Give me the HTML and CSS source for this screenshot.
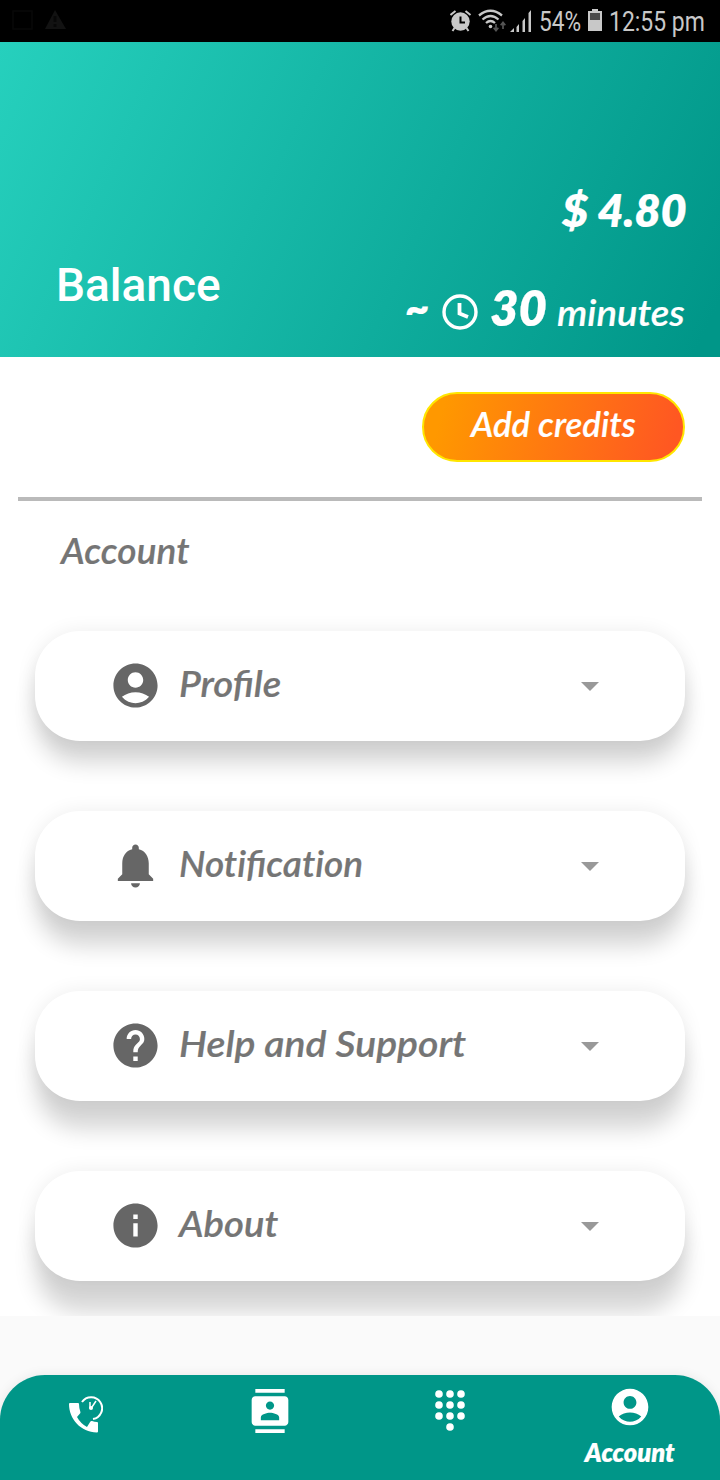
FILE: index.html
```html
<!DOCTYPE html>
<html lang="en">
<head>
<meta charset="utf-8">
<title>Account</title>
<link rel="stylesheet" href="styles.css">
</head>
<body>
<div class="phone">
  <div class="status">
    <svg class="notices" width="60" height="24" viewBox="0 0 60 24">
      <rect x="1" y="2" width="19" height="18" fill="none" stroke="#080808" stroke-width="1.500"/>
      <path d="M43 1L54 20H33z" fill="#121212"/><path d="M41.500 7h3v6h-3zM41.500 15h3v3h-3z" fill="#080808"/>
    </svg>
    <div class="status-right">
      <svg class="alarm" width="22" height="24" viewBox="0 0 22 24">
        <circle cx="10.500" cy="12.500" r="9.200" fill="#c8c8c8"/>
        <path d="M.500 6l5-4M20.500 6l-5-4M4.500 19l-2 3M16.500 19l2 3" stroke="#c8c8c8" stroke-width="2"/>
        <path d="M10.500 7.500v6H15" fill="none" stroke="#000" stroke-width="2"/>
      </svg>
      <svg class="wifi" width="28" height="24" viewBox="0 0 28 24">
        <g fill="none" stroke="#c8c8c8" stroke-width="2.300"><path d="M1 6.500q11.500-9.500 23 0"/><path d="M4.500 10.500q8-7 16 0"/><path d="M8 14q4.500-4 9 0"/></g>
        <circle cx="12.500" cy="17.500" r="1.800" fill="#c8c8c8"/>
        <path d="M18 15v6M15.700 18.700l2.300 3 2.300-3M25 20v-6M22.700 16.300l2.300-3 2.300 3" fill="none" stroke="#555" stroke-width="1.700"/>
      </svg>
      <svg class="signal" width="22" height="24" viewBox="0 0 22 24">
        <path d="M0 23l4-4v4zM6.500 18l2.500-3v8H6.500zM12.500 12l2.500-3v14h-2.500zM18.500 4L21 1v22h-2.500z" fill="#c8c8c8"/>
      </svg>
      <span class="percent">54%</span>
      <svg class="battery" width="14" height="22" viewBox="0 0 14 22"><path d="M4 0h6v2h4v20H0V2h4z" fill="#c8c8c8"/><path d="M2 4h10v7H2z" fill="#4a4a4a"/></svg>
      <span class="time">12:55 pm</span>
    </div>
  </div>

  <header class="hero">
    <div class="title">Balance</div>
    <div class="amounts">
      <div class="money"><span class="t t-money">$ 4.80</span></div>
      <div class="minutes">
        <span class="t t-tilde">~</span>
        <svg class="clock" width="36" height="36" viewBox="0 0 36 36" fill="none" stroke="#fff"><circle cx="18" cy="18" r="16" stroke-width="3.400"/><path d="M17.500 9v10.500l8.500 3.500" stroke-width="3.800"/></svg>
        <span class="t t-thirty">30</span>
        <span class="t t-unit">minutes</span>
      </div>
    </div>
  </header>

  <main class="content">
    <div class="actions"><button class="add"><span class="t t-add">Add credits</span></button></div>
    <div class="rule"></div>
    <h2 class="section"><span class="t t-section">Account</span></h2>
    <div class="cards">
      <div class="card first">
        <svg class="icon" viewBox="0 0 24 24"><path d="M12 2C6.480 2 2 6.480 2 12s4.480 10 10 10 10-4.480 10-10S17.520 2 12 2zm0 4c1.930 0 3.500 1.570 3.500 3.500S13.930 13 12 13s-3.500-1.570-3.500-3.500S10.070 6 12 6zm0 14c-2.030 0-4.430-.820-6.140-2.880C7.550 15.800 9.680 15 12 15s4.450.800 6.140 2.120C16.430 19.180 14.030 20 12 20z"/></svg>
        <span class="t t-profile">Profile</span><i class="caret"></i>
      </div>
      <div class="card second">
        <svg class="icon" viewBox="0 0 24 24"><path d="M12 22c1.100 0 2-.900 2-2h-4c0 1.100.890 2 2 2zm6-6v-5c0-3.070-1.640-5.640-4.500-6.320V4c0-.830-.670-1.500-1.500-1.500s-1.500.670-1.500 1.500v.680C7.630 5.360 6 7.920 6 11v5l-2 2v1h16v-1l-2-2z"/></svg>
        <span class="t t-notification">Not&zwnj;ificat&zwnj;ion</span><i class="caret"></i>
      </div>
      <div class="card third">
        <svg class="icon" viewBox="0 0 24 24"><path d="M12 2C6.480 2 2 6.480 2 12s4.480 10 10 10 10-4.480 10-10S17.520 2 12 2zm1 17h-2v-2h2v2zm2.070-7.750l-.900.920C13.450 12.900 13 13.500 13 15h-2v-.500c0-1.100.450-2.100 1.170-2.830l1.240-1.260c.370-.360.590-.860.590-1.410 0-1.100-.900-2-2-2s-2 .900-2 2H8c0-2.210 1.790-4 4-4s4 1.790 4 4c0 .880-.360 1.680-.930 2.250z"/></svg>
        <span class="t t-help">Help and Support</span><i class="caret"></i>
      </div>
      <div class="card fourth">
        <svg class="icon" viewBox="0 0 24 24"><path d="M12 2C6.480 2 2 6.480 2 12s4.480 10 10 10 10-4.480 10-10S17.520 2 12 2zm1 15h-2v-6h2v6zm0-8h-2V7h2v2z"/></svg>
        <span class="t t-about">About</span><i class="caret"></i>
      </div>
    </div>
  </main>

  <nav class="nav">
    <div class="tab">
      <svg class="calls" width="34" height="38" viewBox="0 0 34 38"><path d="M0 8q0-1 1-1h8q1 0 1 1 0 4 1.400 8 .2 1-.4 1.600L8 21q3.500 6.500 10 10l3.400-5.500q.7-.7 1.600-.4 2.500.9 5 .9 1 0 1 1v8.400q0 1-1 1C12 36.500 0 23 0 8z" fill="#fff"/><path d="M13 6A11 11 0 1 1 24 23" fill="none" stroke="#fff" stroke-width="2"/><path d="M21 6v6.500M27 5l-5 7.500" stroke="#fff" stroke-width="1.500"/><circle cx="22" cy="12" r="2" fill="#fff"/></svg>
    </div>
    <div class="tab">
      <svg class="contacts" width="44" height="44" viewBox="0 0 24 24"><path fill="#fff" d="M20 0H4v2h16V0zM4 24h16v-2H4v2zM20 4H4c-1.100 0-2 .900-2 2v12c0 1.100.900 2 2 2h16c1.100 0 2-.900 2-2V6c0-1.100-.900-2-2-2zm-8 2.750c1.240 0 2.250 1.010 2.250 2.250s-1.010 2.250-2.250 2.250S9.750 10.240 9.750 9 10.760 6.750 12 6.750zM17 17H7v-1.500c0-1.670 3.330-2.500 5-2.500s5 .830 5 2.500V17z"/></svg>
    </div>
    <div class="tab">
      <svg class="dialpad" width="30" height="41" viewBox="0 0 30 41" fill="#fff"><circle cx="4" cy="4" r="3.800"/><circle cx="15" cy="4" r="3.800"/><circle cx="26" cy="4" r="3.800"/><circle cx="4" cy="15" r="3.800"/><circle cx="15" cy="15" r="3.800"/><circle cx="26" cy="15" r="3.800"/><circle cx="4" cy="26" r="3.800"/><circle cx="15" cy="26" r="3.800"/><circle cx="26" cy="26" r="3.800"/><circle cx="15" cy="37" r="3.800"/></svg>
    </div>
    <div class="tab active">
      <svg width="44" height="44" viewBox="0 0 24 24"><path fill="#fff" d="M12 2C6.480 2 2 6.480 2 12s4.480 10 10 10 10-4.480 10-10S17.520 2 12 2zm0 4c1.930 0 3.500 1.570 3.500 3.500S13.930 13 12 13s-3.500-1.570-3.500-3.500S10.070 6 12 6zm0 14c-2.030 0-4.430-.820-6.140-2.880C7.550 15.800 9.680 15 12 15s4.450.800 6.140 2.120C16.430 19.180 14.030 20 12 20z"/></svg>
      <span class="t t-tab">Account</span>
    </div>
  </nav>
</div>
</body>
</html>
```
FILE: styles.css
```css
* { box-sizing: border-box; }
body { margin: 0; background: #fafafa; font-family: Lato, "Open Sans", sans-serif; }
.phone { width: 720px; height: 1480px; display: flex; flex-direction: column; overflow: hidden; background: #fafafa; }

.status { height: 42px; flex: none; background: #000; color: #c8c8c8; display: flex; justify-content: space-between; align-items: flex-start; padding: 10px 0 0 12px; font-family: Roboto, sans-serif; }
.status-right { display: flex; align-items: flex-start; width: 270px; }
.wifi { margin-left: 6px; }
.signal { margin-left: 4px; }
.notices { margin-top: -1px; }
.alarm, .wifi, .signal { flex: none; margin-top: -1px; }
.battery { flex: none; margin-left: 7px; margin-top: -1px; }
.percent, .time { font-size: 27px; line-height: 25px; white-space: nowrap; transform-origin: left; display: block; }
.percent { width: 42px; margin-left: 7px; transform: scaleX(.84); }
.time { margin-left: 7px; transform: scaleX(.85); }

.t { display: block; white-space: nowrap; font-style: italic; font-weight: 600; transform-origin: left; -webkit-text-stroke: .2px currentColor; }

.hero { height: 315px; flex: none; display: flex; justify-content: space-between; color: #fff; padding: 0 35px 0 56px; background: linear-gradient(115deg, #26d0bd 0%, #009688 97%); }
.title { font: 500 46px/54px Roboto, sans-serif; margin-top: 216px; }
.amounts { width: 280px; padding-top: 138px; }
.money { height: 60px; padding-left: 157px; }
.t-money { font-size: 46px; line-height: 60px; font-weight: 800; transform: scaleX(.98); }
.minutes { display: flex; align-items: flex-start; margin-top: 36px; }
.t-tilde { font-size: 42px; line-height: 62px; width: 37px; font-weight: 800; }
.clock { flex: none; margin-top: 18px; }
.t-thirty { font-size: 49px; line-height: 62px; width: 58px; margin-left: 12px; font-weight: 800; }
.t-unit { font-size: 37px; line-height: 62px; margin: 5px 0 0 9px; transform: scaleX(1.035); }

.content { height: 959px; flex: none; background: #fff; overflow: hidden; padding: 35px 35px 0; }
.actions { display: flex; justify-content: flex-end; }
.add { width: 263px; height: 70px; border: 2px solid #ffe600; border-radius: 35px; color: #fff; padding: 0 0 6px 47px; text-align: left; font-family: inherit; background: linear-gradient(105deg, #ff9800 8%, #ff5722 95%); }
.t-add { font-size: 34px; line-height: 50px; transform: scaleX(1.025); }
.rule { height: 4px; background: #bababa; margin: 35px -17px 0; }
.section { margin: 0; padding: 24px 0 0 26px; height: 130px; font-size: 37px; color: #757575; }
.t-section { font-size: 37px; line-height: 50px; letter-spacing: .1px; }
.cards { display: flex; flex-direction: column; gap: 70px; }
.card { height: 110px; flex: none; display: flex; align-items: center; border-radius: 45px; background: #fff; padding: 0 86px 0 73px; color: #757575; }
.first { box-shadow: 0 23px 22px -1px rgba(0,0,0,.165), 0 1px 20px rgba(0,0,0,.08); }
.second { box-shadow: 0 26px 22px -1px rgba(0,0,0,.165), 0 1px 20px rgba(0,0,0,.08); }
.third { box-shadow: 0 29px 22px -1px rgba(0,0,0,.165), 0 1px 20px rgba(0,0,0,.08); }
.fourth { box-shadow: 0 32px 22px -1px rgba(0,0,0,.165), 0 1px 20px rgba(0,0,0,.08); }
.icon { width: 53px; height: 53px; flex: none; fill: #666; margin: -1px 0 0 1px; }
.card .t { font-size: 37px; line-height: 50px; margin: -7px 0 0 17px; }
.card .t-profile { transform: scaleX(1.035); }
.card .t-notification { transform: scaleX(1); }
.card .t-help { transform: scaleX(1.06); }
.card .t-about { transform: scaleX(1.035); }
.caret { flex: none; margin: 1px 0 0 auto; border: 9px solid transparent; border-top-color: #999; border-bottom: 0; }

.nav { height: 105px; flex: none; margin-top: 59px; border-radius: 45px 45px 0 0; background: #009688; color: #fff; display: grid; grid-template-columns: repeat(4, 1fr); box-shadow: 0 0 12px rgba(0,0,0,.08); }
.tab { display: flex; flex-direction: column; align-items: center; }
.calls { margin: 21px 8px 0 0; }
.contacts { margin-top: 14px; }
.dialpad { margin-top: 15px; }
.active { padding-top: 10px; }
.t-tab { font-size: 27px; line-height: 36px; margin-top: 5px; font-weight: 800; transform-origin: center; transform: scaleX(.94); }
```
